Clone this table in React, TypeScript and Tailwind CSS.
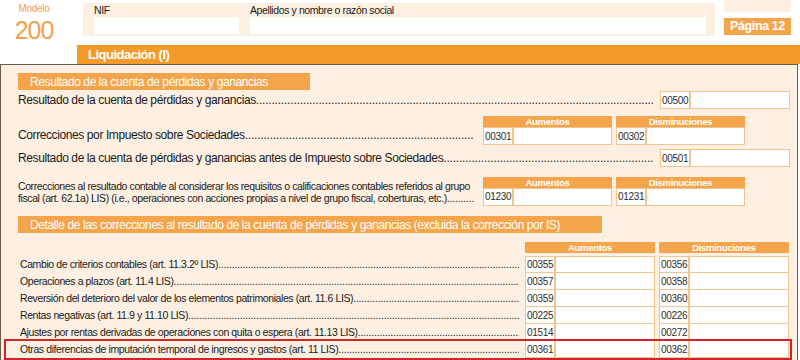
import React from 'react';

const DOTS = '.'.repeat(300);

function Leader({ text, className = '' }: { text: string; className?: string }) {
  return (
    <div className={'flex min-w-0 flex-1 items-end overflow-hidden whitespace-nowrap ' + className}>
      <span>{text}</span>
      <span className="min-w-0 flex-1 overflow-hidden tracking-[-0.2px]">{DOTS}</span>
    </div>
  );
}

function Code({ code, className = 'w-[30px]' }: { code: string; className?: string }) {
  return (
    <div
      className={
        'flex shrink-0 items-center overflow-hidden border-r-2 border-[#f2c48e] pl-[1px] text-[10px] tracking-[-0.3px] text-[#2d2d2d] ' +
        className
      }
    >
      {code}
    </div>
  );
}

function CodeBox({ code, className = '' }: { code: string; className?: string }) {
  return (
    <div className={'flex h-[18px] border border-[#f2c48e] bg-white ' + className}>
      <Code code={code} />
      <div className="flex-1" />
    </div>
  );
}

function ColHeader({ label }: { label: string }) {
  return (
    <div className="flex h-[11px] items-center justify-center bg-[#f4a54b] text-[9.5px] font-bold leading-none tracking-[-0.3px] text-white">
      {label}
    </div>
  );
}

function SectionHeader({ title, className = '' }: { title: string; className?: string }) {
  return (
    <div className={'flex h-[17px] items-center whitespace-nowrap bg-[#f4a54b] pl-[12px] text-[12px] tracking-[-0.4px] text-white ' + className}>
      {title}
    </div>
  );
}

const detailRows = [
  ['Cambio de criterios contables (art. 11.3.2º LIS) ', '00355', '00356'],
  ['Operaciones a plazos (art. 11.4 LIS) ', '00357', '00358'],
  ['Reversión del deterioro del valor de los elementos patrimoniales (art. 11.6 LIS)', '00359', '00360'],
  ['Rentas negativas (art. 11.9 y 11.10 LIS) ', '00225', '00226'],
  ['Ajustes por rentas derivadas de operaciones con quita o espera (art. 11.13 LIS) ', '01514', '00272'],
  ['Otras diferencias de imputación temporal de ingresos y gastos (art. 11 LIS) ', '00361', '00362'],
];

export default function App() {
  return (
    <div className="h-[360px] w-[800px] overflow-hidden bg-white font-['Liberation_Sans',Arial,sans-serif] text-[#1a1a1a]">
      {/* Cabecera */}
      <div className="flex h-[45px]">
        <div className="flex w-[68px] flex-col items-center pt-[3px] text-[#f2a04c]">
          <span className="text-[10px] leading-[11px] tracking-[-0.3px]">Modelo</span>
          <span className="mt-[3px] text-[25px] leading-[26px] tracking-[-1px]">200</span>
        </div>
        <div className="ml-[15px] mt-[3px] flex h-[33px] w-[632px] gap-[11px] bg-[#fdf0e2] pl-[11px] pr-[9px]">
          <div className="flex w-[145px] flex-col">
            <span className="pt-[2px] text-[10.5px] leading-[11px] tracking-[-0.4px]">NIF</span>
            <div className="mt-[1px] h-[17px] bg-white" />
          </div>
          <div className="flex flex-1 flex-col">
            <span className="pt-[2px] text-[10.5px] leading-[11px] tracking-[-0.4px]">Apellidos y nombre o razón social</span>
            <div className="mt-[1px] h-[17px] bg-white" />
          </div>
        </div>
        <div className="ml-[9px] flex w-[67px] flex-col">
          <div className="h-[12px] bg-[#fdf0e2]" />
          <div className="mt-[6px] flex h-[17px] items-center justify-center whitespace-nowrap bg-[#f4a54b] text-[12.5px] font-bold tracking-[-0.4px] text-white">
            Página 12
          </div>
        </div>
      </div>

      <div className="ml-[77px] flex h-[19px] items-center whitespace-nowrap bg-[#f39a2b] pl-[11px] text-[13px] font-bold tracking-[-0.5px] text-white">
        Liquidación (I)
      </div>

      {/* Panel */}
      <div className="h-[300px] w-[798px] border border-[#6e5c47] bg-[#fdf0e2] pl-[17px] pr-[7px]">
        <SectionHeader title="Resultado de la cuenta de pérdidas y ganancias" className="mt-[8px] w-[292px]" />

        <div className="mt-[1px] flex h-[18px] items-center text-[12px] tracking-[-0.4px]">
          <Leader text="Resultado de la cuenta de pérdidas y ganancias " />
          <CodeBox code="00500" className="ml-[7px] w-[130px]" />
        </div>

        <div className="mt-[7px] flex items-end text-[12px] tracking-[-0.4px]">
          <Leader text="Correcciones por Impuesto sobre Sociedades" className="pb-[1px]" />
          <div className="ml-[9px] mr-[45px] flex gap-[4px]">
            <div className="w-[129px]">
              <ColHeader label="Aumentos" />
              <CodeBox code="00301" />
            </div>
            <div className="w-[129px]">
              <ColHeader label="Disminuciones" />
              <CodeBox code="00302" />
            </div>
          </div>
        </div>

        <div className="mt-[4px] flex h-[18px] items-center text-[12px] tracking-[-0.4px]">
          <Leader text="Resultado de la cuenta de pérdidas y ganancias antes de Impuesto sobre Sociedades" />
          <CodeBox code="00501" className="ml-[7px] w-[130px]" />
        </div>

        <div className="mt-[10px] flex items-end text-[10.5px] leading-[12px] tracking-[-0.4px]">
          <div className="flex min-w-0 flex-1 flex-col pb-[2px]">
            <span className="whitespace-nowrap">
              Correcciones al resultado contable al considerar los requisitos o calificaciones contables referidos al grupo
            </span>
            <Leader
              text="fiscal (art. 62.1a) LIS) (i.e., operaciones con acciones propias a nivel de grupo fiscal, coberturas, etc.)"
              className="w-[457px] flex-none"
            />
          </div>
          <div className="ml-[9px] mr-[45px] flex gap-[4px]">
            <div className="w-[129px]">
              <ColHeader label="Aumentos" />
              <CodeBox code="01230" />
            </div>
            <div className="w-[129px]">
              <ColHeader label="Disminuciones" />
              <CodeBox code="01231" />
            </div>
          </div>
        </div>

        <SectionHeader
          title="Detalle de las correcciones al resultado de la cuenta de pérdidas y ganancias (excluida la corrección por IS)"
          className="mt-[10px] w-[584px]"
        />

        <div className="mt-[9px] flex">
          <div className="flex-1" />
          <div className="mr-[1px] flex w-[264px] gap-[4px]">
            <div className="w-[130px]">
              <ColHeader label="Aumentos" />
            </div>
            <div className="w-[130px]">
              <ColHeader label="Disminuciones" />
            </div>
          </div>
        </div>

        <div className="mt-[3px] flex flex-col">
          {detailRows.map(([label, a, b], i) => (
            <div
              key={a}
              className={
                'flex h-[17px] items-center text-[10.5px] tracking-[-0.4px] ' +
                (i === detailRows.length - 1 ? '-ml-[12px] pl-[14px] outline-2 outline-[#d2232a]' : 'pl-[2px]')
              }
            >
              <Leader text={label} className="mr-[6px]" />
              <div className="mr-[1px] flex h-[17px] w-[264px] gap-[4px]">
                <div
                  className={
                    'flex w-[130px] border-x border-b border-[#f2c48e] bg-white ' + (i === 0 ? 'border-t' : '')
                  }
                >
                  <Code code={a} />
                </div>
                <div
                  className={
                    'flex w-[130px] border-x border-b border-[#f2c48e] bg-white ' + (i === 0 ? 'border-t' : '')
                  }
                >
                  <Code code={b} />
                </div>
              </div>
            </div>
          ))}
        </div>
      </div>
    </div>
  );
}
